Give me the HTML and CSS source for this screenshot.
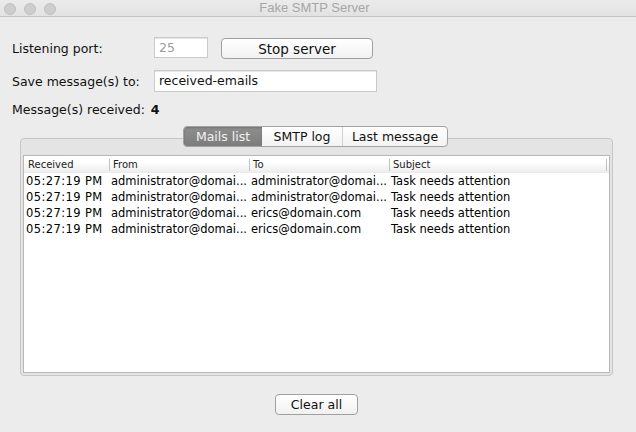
FILE: index.html
```html
<!DOCTYPE html>
<html>
<head>
<meta charset="utf-8">
<title>Fake SMTP Server</title>
<link rel="stylesheet" href="styles.css">
</head>
<body>
<div class="window">
  <div class="titlebar">
    <div class="lights"><span class="light"></span><span class="light"></span><span class="light"></span></div>
    <div class="title">Fake SMTP Server</div>
    <div class="spacer"></div>
  </div>
  <div class="form">
    <div class="row row-port">
      <span class="label">Listening port:</span>
      <div class="input input-port">25</div>
      <button class="btn btn-stop">Stop server</button>
    </div>
    <div class="row row-save">
      <span class="label">Save message(s) to:</span>
      <div class="input input-path">received-emails</div>
    </div>
    <div class="row row-count">
      <span class="label-inline">Message(s) received:</span><span class="count">4</span>
    </div>
  </div>
  <div class="tabs-area">
    <div class="tabs">
      <div class="tab tab-mails active">Mails list</div>
      <div class="tab tab-log">SMTP log</div>
      <div class="tab tab-last">Last message</div>
    </div>
  </div>
  <div class="panel">
    <div class="table">
      <div class="thead">
        <div class="th th-first">Received</div>
        <div class="th">From</div>
        <div class="th">To</div>
        <div class="th">Subject</div>
        <div class="th th-end"></div>
      </div>
      <div class="tr"><div class="td td-time">05:27:19 PM</div><div class="td">administrator@domai...</div><div class="td">administrator@domai...</div><div class="td">Task needs attention</div></div>
      <div class="tr"><div class="td td-time">05:27:19 PM</div><div class="td">administrator@domai...</div><div class="td">administrator@domai...</div><div class="td">Task needs attention</div></div>
      <div class="tr"><div class="td td-time">05:27:19 PM</div><div class="td">administrator@domai...</div><div class="td">erics@domain.com</div><div class="td">Task needs attention</div></div>
      <div class="tr"><div class="td td-time">05:27:19 PM</div><div class="td">administrator@domai...</div><div class="td">erics@domain.com</div><div class="td">Task needs attention</div></div>
    </div>
  </div>
  <div class="footer">
    <button class="btn btn-clear">Clear all</button>
  </div>
</div>
</body>
</html>
```
FILE: styles.css
```css
html, body {
  margin: 0;
  padding: 0;
}
body {
  background: #ececec;
  font-family: "DejaVu Sans", "Liberation Sans", sans-serif;
  color: #111;
}
.window {
  width: 636px;
  height: 432px;
  background: #ececec;
  overflow: hidden;
}
.titlebar {
  height: 16px;
  border-bottom: 1px solid #c4c4c4;
  background: linear-gradient(to bottom, #ebebeb, #e2e2e2);
  display: grid;
  grid-template-columns: 1fr auto 1fr;
  align-items: center;
}
.lights {
  display: flex;
  gap: 8px;
  padding-left: 4px;
  padding-top: 1px;
}
.light {
  width: 12px;
  height: 12px;
  box-sizing: border-box;
  border-radius: 50%;
  background: #cdcdcd;
  border: 1px solid #c0c0c0;
}
.title {
  font-family: "Liberation Sans", Arial, sans-serif;
  font-size: 13px;
  color: #a6a6a6;
  margin-right: 7px;
  line-height: 16px;
}
.form {
  padding: 20px 0 0 12px;
}
.row {
  display: flex;
  align-items: center;
}
.label {
  width: 142px;
  flex: none;
  font-size: 12.5px;
  color: #111;
}
.row-port {
  height: 22px;
}
.input {
  box-sizing: border-box;
  background: #fff;
  border: 1px solid #cacaca;
  box-shadow: inset 0 1px 0 #e6e6e6;
  font-size: 12.5px;
  line-height: 19px;
  padding-left: 4px;
}
.input-port {
  width: 54px;
  height: 21px;
  color: #9c9c9c;
  align-self: flex-start;
}
.btn {
  box-sizing: border-box;
  border: 1px solid #a0a0a0;
  border-radius: 4px;
  background: linear-gradient(to bottom, #ffffff, #f1f1f1);
  font-family: "DejaVu Sans", sans-serif;
  color: #111;
  padding: 0;
  margin: 0;
}
.btn-stop {
  width: 152px;
  height: 21px;
  margin-left: 13px;
  font-size: 13.5px;
  align-self: flex-end;
}
.row-save {
  margin-top: 11px;
  height: 22px;
}
.input-path {
  width: 223px;
  height: 22px;
  line-height: 20px;
  color: #111;
}
.row-count {
  margin-top: 9px;
  height: 16px;
  font-size: 12.5px;
}
.count {
  margin-left: 6px;
  font-weight: bold;
}
.tabs-area {
  margin-top: 9px;
  padding-left: 183px;
  display: flex;
  position: relative;
  z-index: 1;
}
.tabs {
  display: flex;
  height: 21px;
  box-sizing: border-box;
  border: 1px solid #a2a2a2;
  border-radius: 4px;
  overflow: hidden;
  background: linear-gradient(to bottom, #ffffff, #f3f3f3);
  font-size: 12.5px;
}
.tab {
  display: flex;
  align-items: center;
  justify-content: center;
  color: #111;
}
.tab-mails {
  width: 78px;
}
.tab-log {
  width: 80px;
}
.tab-last {
  width: 105px;
  border-left: 1px solid #d2d2d2;
  box-sizing: border-box;
}
.tab.active {
  background: linear-gradient(to bottom, #8e8e8e, #7d7d7d);
  color: #f2f2f2;
  box-shadow: inset 0 1px 2px rgba(0,0,0,0.2);
}
.panel {
  margin-top: -9px;
  margin-left: 20px;
  width: 593px;
  height: 238px;
  box-sizing: border-box;
  border: 1px solid #c6c6c6;
  border-radius: 4px;
  background: #e4e4e4;
  padding: 16px 2px 2px 2px;
}
.table {
  height: 100%;
  box-sizing: border-box;
  border: 1px solid #b8b8b8;
  background: #fff;
}
.thead {
  height: 17px;
  display: grid;
  grid-template-columns: 85px 140px 140px 217px 1fr;
  align-items: center;
  background: linear-gradient(to bottom, #ffffff 35%, #ebebeb);
  font-size: 10px;
  color: #222;
}
.th {
  height: 12px;
  line-height: 12px;
  border-left: 1px solid #c2c2c2;
  padding-left: 3px;
  white-space: nowrap;
}
.th-first {
  border-left: none;
  padding-left: 4px;
}
.th-end {
  padding-left: 0;
}
.tr {
  height: 16px;
  display: grid;
  grid-template-columns: 85px 140px 140px 217px 1fr;
  align-items: center;
  font-size: 11.5px;
  color: #000;
}
.td {
  padding-left: 2px;
  white-space: nowrap;
  overflow: hidden;
  line-height: 16px;
}
.td-time {
  letter-spacing: 0.4px;
}
.footer {
  margin-top: 18px;
  margin-left: 20px;
  width: 593px;
  display: flex;
  justify-content: center;
}
.btn-clear {
  width: 83px;
  height: 21px;
  font-size: 12.5px;
}
```
